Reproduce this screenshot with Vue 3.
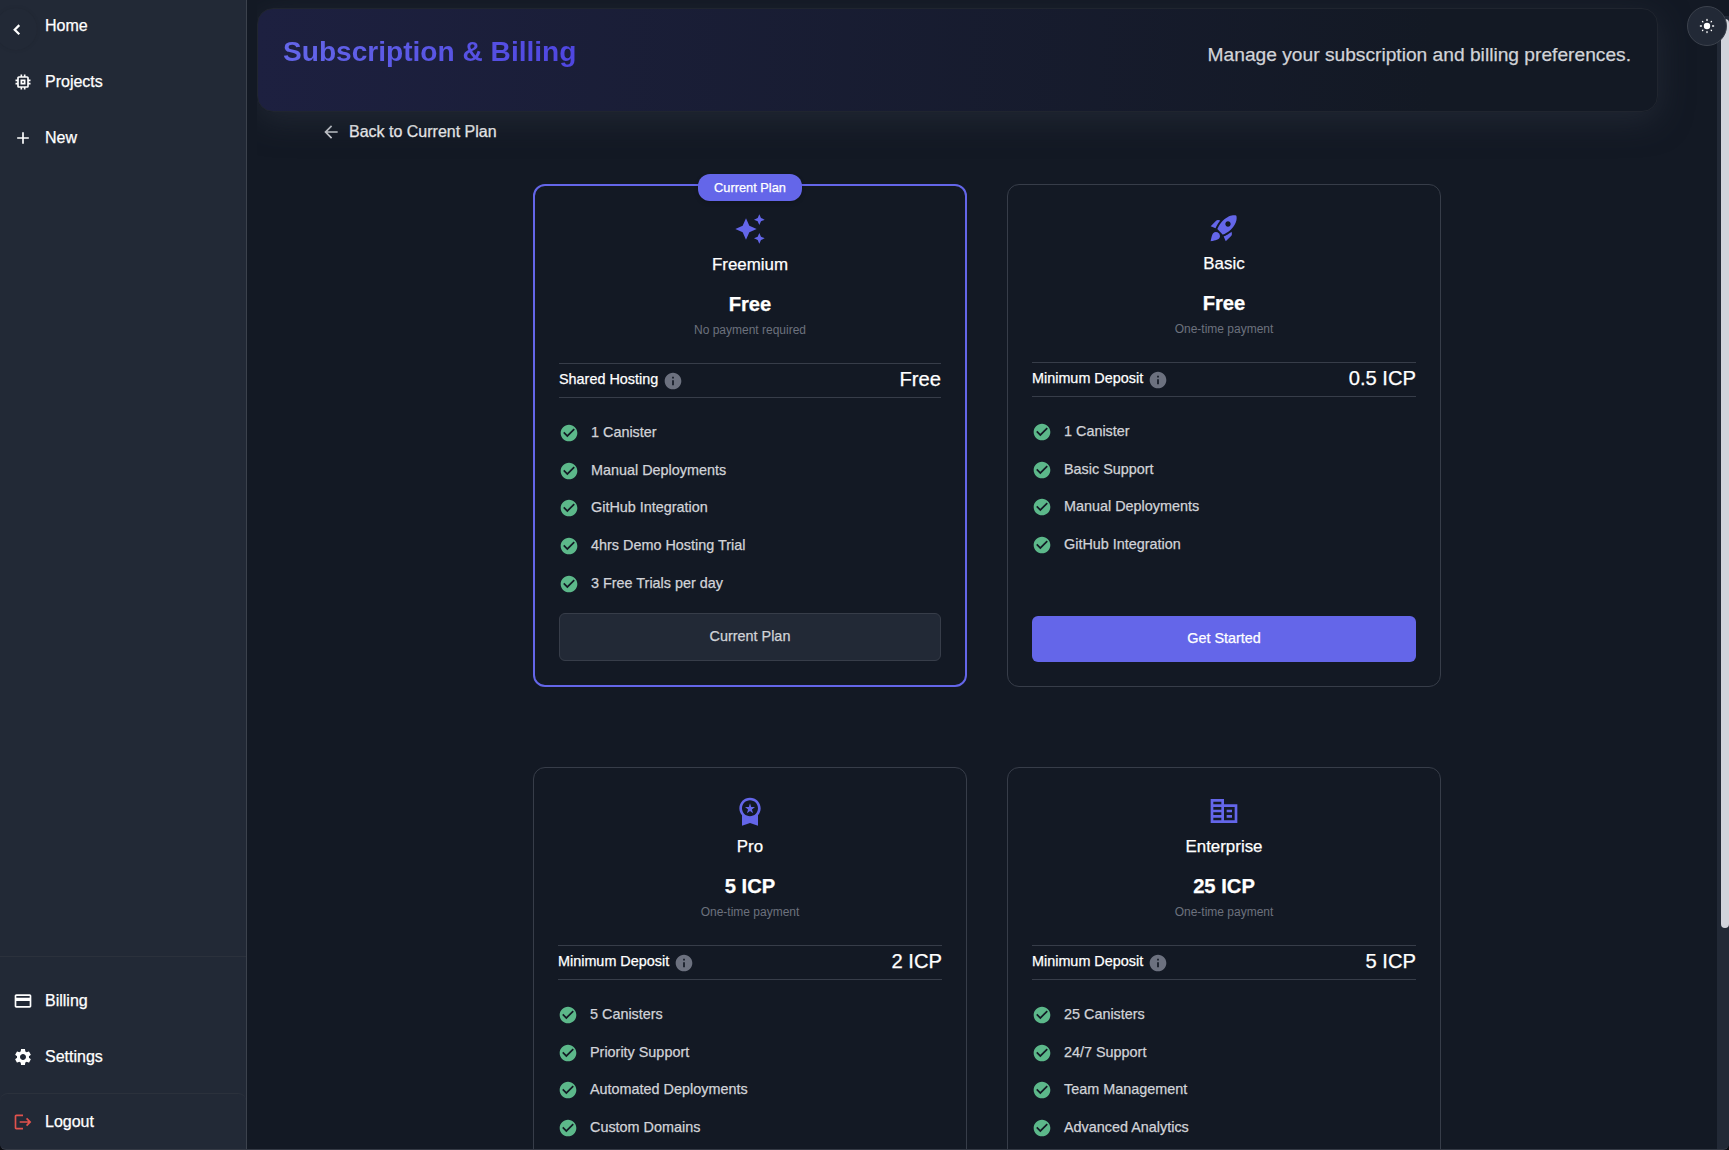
<script setup>
const icons = {
  chip: 'M15 9H9v6h6V9zm-2 4h-2v-2h2v2zm8-2V9h-2V7c0-1.1-.9-2-2-2h-2V3h-2v2h-2V3H9v2H7c-1.1 0-2 .9-2 2v2H3v2h2v2H3v2h2v2c0 1.1.9 2 2 2h2v2h2v-2h2v2h2v-2h2c1.1 0 2-.9 2-2v-2h2v-2h-2v-2h2zm-4 6H7V7h10v10z',
  add: 'M19 13h-6v6h-2v-6H5v-2h6V5h2v6h6v2z',
  card: 'M20 4H4c-1.11 0-1.99.89-1.99 2L2 18c0 1.11.89 2 2 2h16c1.11 0 2-.89 2-2V6c0-1.11-.89-2-2-2zm0 14H4v-6h16v6zm0-10H4V6h16v2z',
  settings: 'M19.14 12.94c.04-.3.06-.61.06-.94 0-.32-.02-.64-.07-.94l2.03-1.58c.18-.14.23-.41.12-.61l-1.92-3.32c-.12-.22-.37-.29-.59-.22l-2.39.96c-.5-.38-1.03-.7-1.62-.94l-.36-2.54c-.04-.24-.24-.41-.48-.41h-3.84c-.24 0-.43.17-.47.41l-.36 2.54c-.59.24-1.13.57-1.62.94l-2.39-.96c-.22-.08-.47 0-.59.22L2.74 8.87c-.12.21-.08.47.12.61l2.03 1.58c-.05.3-.09.63-.09.94s.02.64.07.94l-2.03 1.58c-.18.14-.23.41-.12.61l1.92 3.32c.12.22.37.29.59.22l2.39-.96c.5.38 1.03.7 1.62.94l.36 2.54c.05.24.24.41.48.41h3.84c.24 0 .44-.17.47-.41l.36-2.54c.59-.24 1.13-.56 1.62-.94l2.39.96c.22.08.47 0 .59-.22l1.92-3.32c.12-.22.07-.47-.12-.61l-2.01-1.58zM12 15.6c-1.98 0-3.6-1.62-3.6-3.6s1.62-3.6 3.6-3.6 3.6 1.62 3.6 3.6-1.62 3.6-3.6 3.6z',
  logout: 'm17 7-1.41 1.41L18.17 11H8v2h10.17l-2.58 2.58L17 17l5-5zM4 5h8V3H4c-1.1 0-2 .9-2 2v14c0 1.1.9 2 2 2h8v-2H4V5z',
  back: 'M20 11H7.83l5.59-5.59L12 4l-8 8 8 8 1.41-1.41L7.83 13H20v-2z',
  sparkles: 'm19 9 1.25-2.75L23 5l-2.75-1.25L19 1l-1.25 2.75L15 5l2.75 1.25L19 9zm-7.5.5L9 4 6.5 9.5 1 12l5.5 2.5L9 20l2.5-5.5L17 12l-5.5-2.5zM19 15l-1.25 2.75L15 19l2.75 1.25L19 23l1.25-2.75L23 19l-2.75-1.25L19 15z',
  rocket: 'M9.19 6.35c-2.04 2.29-3.44 5.58-3.57 5.89L2 10.69l4.05-4.05c.47-.47 1.15-.68 1.81-.55l1.33.26zM11.17 17s3.74-1.55 5.89-3.7c5.4-5.4 4.5-9.62 4.21-10.57-.95-.3-5.17-1.19-10.57 4.21C8.55 9.09 7 12.83 7 12.83L11.17 17zm6.48-2.19c-2.29 2.04-5.58 3.44-5.89 3.57L13.31 22l4.05-4.05c.47-.47.68-1.15.55-1.81l-.26-1.33zM9 18c0 .83-.34 1.58-.88 2.12C6.94 21.3 2 22 2 22s.7-4.94 1.88-6.12A2.996 2.996 0 0 1 9 18zm4-9c0-1.1.9-2 2-2s2 .9 2 2-.9 2-2 2-2-.9-2-2z',
  medal: 'M9.68 13.69 12 11.93l2.31 1.76-.88-2.85L15.75 9h-2.84L12 6.19 11.09 9H8.25l2.31 1.84-.88 2.85zM20 10c0-4.42-3.58-8-8-8s-8 3.58-8 8c0 2.03.76 3.87 2 5.28V23l6-2 6 2v-7.72c1.24-1.41 2-3.25 2-5.28zm-8-6c3.31 0 6 2.69 6 6s-2.69 6-6 6-6-2.69-6-6 2.69-6 6-6z',
  building: 'M12 7V3H2v18h20V7H12zm-2 12H4v-2h6v2zm0-4H4v-2h6v2zm0-4H4V9h6v2zm0-4H4V5h6v2zm10 12h-8V9h8v10zm-2-8h-4v2h4v-2zm0 4h-4v2h4v-2z',
  check: 'M12 2C6.48 2 2 6.48 2 12s4.48 10 10 10 10-4.48 10-10S17.52 2 12 2zm-2 15-5-5 1.41-1.41L10 14.17l7.59-7.59L19 8l-9 9z',
  info: 'M12 2C6.48 2 2 6.48 2 12s4.48 10 10 10 10-4.48 10-10S17.52 2 12 2zm1 15h-2v-6h2v6zm0-8h-2V7h2v2z',
}

const plans = [
  {
    name: 'Freemium', icon: 'sparkles', price: 'Free', note: 'No payment required',
    label: 'Shared Hosting', value: 'Free', current: true, action: 'Current Plan',
    features: ['1 Canister', 'Manual Deployments', 'GitHub Integration', '4hrs Demo Hosting Trial', '3 Free Trials per day'],
  },
  {
    name: 'Basic', icon: 'rocket', price: 'Free', note: 'One-time payment',
    label: 'Minimum Deposit', value: '0.5 ICP', action: 'Get Started',
    features: ['1 Canister', 'Basic Support', 'Manual Deployments', 'GitHub Integration'],
  },
  {
    name: 'Pro', icon: 'medal', price: '5 ICP', note: 'One-time payment',
    label: 'Minimum Deposit', value: '2 ICP',
    features: ['5 Canisters', 'Priority Support', 'Automated Deployments', 'Custom Domains'],
  },
  {
    name: 'Enterprise', icon: 'building', price: '25 ICP', note: 'One-time payment',
    label: 'Minimum Deposit', value: '5 ICP',
    features: ['25 Canisters', '24/7 Support', 'Team Management', 'Advanced Analytics'],
  },
]
</script>

<template>
  <div class="app">
    <aside class="sidebar">
      <button class="collapse" aria-label="Collapse">
        <svg viewBox="0 0 22 22"><path d="M14.3 7.1 9.7 11.7l4.6 4.6" /></svg>
      </button>
      <nav class="nav">
        <a class="item"><span class="slot"></span>Home</a>
        <a class="item"><svg class="slot" viewBox="0 0 24 24"><path :d="icons.chip" /></svg>Projects</a>
        <a class="item"><svg class="slot" viewBox="0 0 24 24"><path :d="icons.add" /></svg>New</a>
      </nav>
      <nav class="nav lower">
        <a class="item"><svg class="slot" viewBox="0 0 24 24"><path :d="icons.card" /></svg>Billing</a>
        <a class="item"><svg class="slot" viewBox="0 0 24 24"><path :d="icons.settings" /></svg>Settings</a>
      </nav>
      <a class="item logout"><svg class="slot" viewBox="0 0 24 24"><path :d="icons.logout" /></svg>Logout</a>
    </aside>

    <main class="main">
      <header class="header">
        <h1>Subscription &amp; Billing</h1>
        <p>Manage your subscription and billing preferences.</p>
      </header>
      <a class="back"><svg viewBox="0 0 24 24"><path :d="icons.back" /></svg>Back to Current Plan</a>

      <section class="plans">
        <article v-for="plan in plans" :key="plan.name" class="plan" :class="{ current: plan.current }">
          <span v-if="plan.current" class="badge">Current Plan</span>
          <svg class="plan-icon" viewBox="0 0 24 24"><path :d="icons[plan.icon]" /></svg>
          <h2>{{ plan.name }}</h2>
          <div class="price">{{ plan.price }}</div>
          <div class="note">{{ plan.note }}</div>
          <div class="deposit">
            <span class="label">{{ plan.label }}<svg viewBox="0 0 24 24"><path :d="icons.info" /></svg></span>
            <span class="value">{{ plan.value }}</span>
          </div>
          <ul>
            <li v-for="feature in plan.features" :key="feature">
              <svg viewBox="0 0 24 24"><path :d="icons.check" /></svg>{{ feature }}
            </li>
          </ul>
          <button v-if="plan.action" class="cta">{{ plan.action }}</button>
        </article>
      </section>
    </main>

    <div class="scroll"><div class="thumb"></div></div>
    <button class="theme" aria-label="Theme">
      <svg viewBox="0 0 16 16">
        <circle cx="8" cy="8" r="3.2" />
        <g stroke-width="1.3" stroke-linecap="round">
          <path d="M8 1.4v1M8 13.6v1M1.4 8h1M13.6 8h1M3.5 3.5l.4.4M12.1 12.1l.4.4M3.5 12.5l.4-.4M12.1 3.9l.4-.4" />
        </g>
      </svg>
    </button>
  </div>
</template>

<style>
body {
  margin: 0;
  background: #0b0d12;
}
</style>

<style scoped>
.app {
  position: relative;
  display: flex;
  width: 1729px;
  height: 1150px;
  overflow: hidden;
  border-radius: 0 0 6px 6px;
  background: #131924;
  color: #fff;
  font-family: "Liberation Sans", Arial, Helvetica, sans-serif;
  -webkit-text-stroke: 0.25px;
}
.app::after {
  content: "";
  position: absolute;
  inset: 0;
  border-bottom: 1px solid #353a45;
  border-radius: 0 0 6px 6px;
  pointer-events: none;
}
svg {
  display: block;
  flex: none;
  fill: currentColor;
}
button {
  padding: 0;
  border: 0;
  font-family: inherit;
}
.sidebar {
  position: relative;
  box-sizing: border-box;
  display: flex;
  flex-direction: column;
  width: 247px;
  flex: none;
  border-right: 1px solid #3c424d;
  background: #222936;
}
.nav {
  margin-top: -2px;
}
.lower {
  margin-top: auto;
  padding: 16px 0 8px;
  border-top: 1px solid #2b313c;
}
.item {
  display: flex;
  align-items: center;
  gap: 12px;
  height: 56px;
  padding-left: 13px;
  font-size: 16px;
}
.slot {
  width: 20px;
  height: 20px;
}
.logout {
  border-top: 1px solid #2b313c;
  border-radius: 8px 8px 0 0;
}
.logout svg {
  color: #e0524d;
}
.collapse {
  position: absolute;
  left: -5px;
  top: 8px;
  display: grid;
  place-items: center;
  width: 42px;
  height: 42px;
  border-radius: 50%;
  background: #222936;
  box-shadow: 0 0 4px rgba(0, 0, 0, 0.08);
  color: #fff;
}
.collapse svg {
  width: 22px;
  height: 22px;
  fill: none;
  stroke: currentColor;
  stroke-width: 2.2;
}
.main {
  display: flex;
  flex-direction: column;
  width: 1401px;
  padding: 8px 0 0 10px;
}
.header {
  box-sizing: border-box;
  display: flex;
  justify-content: space-between;
  align-items: baseline;
  flex: none;
  height: 104px;
  padding: 26px 26px 0 25px;
  border: 1px solid #20252f;
  border-radius: 16px;
  background: linear-gradient(92deg, #1d2040, #131924 84%);
  box-shadow: 0 8px 32px rgba(42, 48, 62, 0.62);
  clip-path: inset(-8px -70px -70px 0);
}
h1 {
  margin: 0;
  font-size: 28.1px;
  line-height: 34px;
  background: linear-gradient(90deg, #6466e9, #4f46e0);
  background-clip: text;
  color: transparent;
  -webkit-text-stroke: 0;
}
.header p {
  margin: 0;
  font-size: 19.2px;
  line-height: 28px;
  color: #d1d3d8;
}
.back {
  display: flex;
  align-items: center;
  gap: 8px;
  height: 24px;
  margin: 10px 0 0 64px;
  font-size: 16px;
}
.back svg {
  width: 20px;
  height: 20px;
  color: #d1d3d8;
}
.plans {
  display: grid;
  grid-template-columns: 434px 434px;
  grid-auto-rows: 503px;
  gap: 80px 40px;
  margin: 38px 0 0 276px;
  padding-top: 4px;
}
.plan {
  position: relative;
  box-sizing: border-box;
  display: flex;
  flex-direction: column;
  align-items: center;
  padding: 27px 24px 24px;
  border: 1px solid #373d49;
  border-radius: 12px;
}
.plan.current {
  border: 2px solid #6466e9;
}
.badge {
  position: absolute;
  top: -12px;
  left: 163px;
  width: 104px;
  border-radius: 12px;
  background: #6466e9;
  box-shadow: 0 2px 4px rgba(0, 0, 0, 0.2);
  font-size: 12.8px;
  line-height: 27px;
  text-align: center;
}
.plan-icon {
  width: 32px;
  height: 32px;
  color: #6466e9;
}
h2 {
  margin: 8px 0 15px;
  font-size: 16.9px;
  font-weight: 400;
  line-height: 24px;
}
.price {
  font-size: 20.2px;
  font-weight: 700;
  line-height: 24px;
}
.note {
  margin: 5px 0 24px;
  font-size: 12px;
  line-height: 18px;
  color: #6c717d;
  -webkit-text-stroke: 0;
}
.deposit {
  box-sizing: border-box;
  display: flex;
  justify-content: space-between;
  align-items: center;
  align-self: stretch;
  height: 35px;
  padding-bottom: 3px;
  border: solid #373d49;
  border-width: 1px 0;
}
.label {
  display: flex;
  align-items: center;
  gap: 5px;
  font-size: 14.4px;
  line-height: 20px;
}
.label svg {
  width: 20px;
  height: 20px;
  margin-top: 4px;
  color: #6c717f;
}
.value {
  font-size: 20.2px;
  line-height: 24px;
}
ul {
  align-self: stretch;
  display: flex;
  flex-direction: column;
  gap: 16px;
  margin: 23.4px 0 0;
  padding: 0;
  list-style: none;
}
li {
  display: flex;
  align-items: center;
  gap: 12px;
  height: 21.6px;
  font-size: 14.4px;
  color: #d1d3d8;
}
li svg {
  width: 20px;
  height: 20px;
  margin-top: 2px;
  color: #5cb88a;
}
.cta {
  align-self: stretch;
  height: 46px;
  margin-top: auto;
  padding-bottom: 3px;
  border-radius: 6px;
  background: #6466e9;
  color: #fff;
  font-size: 14.4px;
}
.current .cta {
  height: 48px;
  border: 1px solid #373d49;
  background: #222936;
  color: #d1d3d8;
}
.scroll {
  position: absolute;
  top: 16px;
  right: 0;
  width: 8px;
  height: 1134px;
  padding-left: 4px;
  background: #222936;
}
.thumb {
  height: 909px;
  margin-top: 3px;
  border-radius: 4px;
  background: #d1d3db;
}
.theme {
  position: absolute;
  top: 6px;
  left: 1687px;
  box-sizing: border-box;
  display: grid;
  place-items: center;
  width: 40px;
  height: 40px;
  border: 1px solid #3c424d;
  border-radius: 50%;
  background: #222936;
  color: #fff;
}
.theme svg {
  width: 16px;
  height: 16px;
  stroke: currentColor;
  stroke-width: 0;
}
</style>
